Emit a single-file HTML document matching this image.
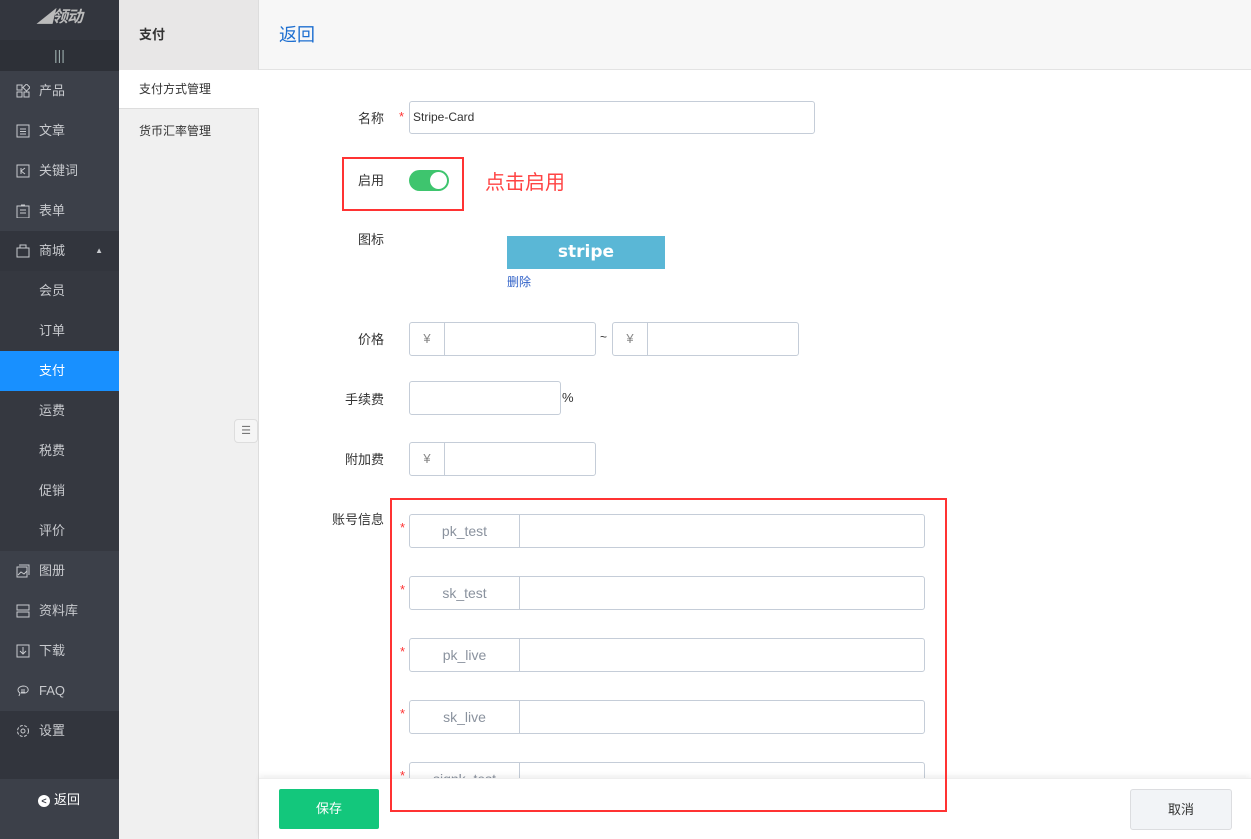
<!DOCTYPE html>
<html><head><meta charset="utf-8"><style>
*{box-sizing:border-box;margin:0;padding:0}
body{width:1251px;height:839px;overflow:hidden;font-family:"Liberation Sans","Noto Sans CJK SC",sans-serif;font-size:13px;color:#333;background:#fff;position:relative}
.abs{position:absolute}
.sb{left:0;top:0;width:119px;height:839px;background:#3c4049}
.mi{position:absolute;left:0;width:119px;height:40px;color:#c8cace;font-size:13px;line-height:40px;padding-left:39px}
.mi svg{position:absolute;left:16px;top:13px}
.sub{padding-left:39px;background:#353840}
.col2{left:119px;top:0;width:140px;height:839px;background:#f0f0f0;border-right:1px solid #ddd}
.lbl{position:absolute;font-size:13px;color:#333;text-align:right;width:80px}
.inp{position:absolute;border:1px solid #c5cdd8;border-radius:3px;background:#fff;height:34px}
.pre{position:absolute;left:0;top:0;bottom:0;border-right:1px solid #c5cdd8;text-align:center;line-height:32px;color:#888}
.star{position:absolute;color:#f33;font-size:13px}
.acc{position:absolute;left:409px;width:516px;height:34px;border:1px solid #c5cdd8;border-radius:3px;background:#fff}
.acc span{position:absolute;left:0;top:0;width:110px;height:32px;border-right:1px solid #c5cdd8;text-align:center;line-height:32px;color:#8a929e;font-size:14px}
</style></head><body>
<div class="abs sb">
 <div class="abs" style="left:0;top:0;width:119px;height:40px;background:#33363e;color:#bbb;font-style:italic;font-weight:bold;font-size:16px;text-align:center;line-height:36px;letter-spacing:-1px">◢领动</div>
 <div class="abs" style="left:0;top:40px;width:119px;height:31px;background:#2d3037;color:#9aa;text-align:center;line-height:31px;font-size:14px">|||</div>
 <div class="mi" style="top:71px"><svg width="14" height="14" fill="none" stroke="#c8cace"><rect x="1" y="1" width="5" height="5"/><rect x="1" y="8" width="5" height="5"/><rect x="8" y="8" width="5" height="5"/><rect x="8" y="1" width="5" height="5" transform="rotate(45 10.5 3.5)"/></svg>产品</div>
 <div class="mi" style="top:111px"><svg width="14" height="14" fill="none" stroke="#c8cace"><rect x="1" y="1" width="12" height="12"/><path d="M4 5h6M4 7.5h6M4 10h6"/></svg>文章</div>
 <div class="mi" style="top:151px"><svg width="14" height="14" fill="none" stroke="#c8cace"><rect x="1" y="1" width="12" height="12"/><path d="M5 4v6M9 4L5 7l4 3"/></svg>关键词</div>
 <div class="mi" style="top:191px"><svg width="14" height="14" fill="none" stroke="#c8cace"><rect x="1" y="2" width="12" height="12"/><path d="M5 1h4M4 6h6M4 9h6"/></svg>表单</div>
 <div class="mi" style="top:231px;background:#32353d"><svg width="14" height="14" fill="none" stroke="#c8cace"><rect x="1" y="4" width="12" height="9"/><path d="M4 4V1h6v3"/></svg>商城<span style="position:absolute;right:16px;top:0;font-size:8px">▲</span></div>
 <div class="abs" style="left:0;top:271px;width:119px;height:280px;background:#353840"></div>
 <div class="mi sub" style="top:271px">会员</div>
 <div class="mi sub" style="top:311px">订单</div>
 <div class="mi sub" style="top:351px;background:#1890ff;color:#fff">支付</div>
 <div class="mi sub" style="top:391px">运费</div>
 <div class="mi sub" style="top:431px">税费</div>
 <div class="mi sub" style="top:471px">促销</div>
 <div class="mi sub" style="top:511px">评价</div>
 <div class="mi" style="top:551px"><svg width="14" height="14" fill="none" stroke="#c8cace"><rect x="1" y="3" width="10" height="10"/><path d="M3 1h10v10M2 11l3-3 3 2 3-3"/></svg>图册</div>
 <div class="mi" style="top:591px"><svg width="14" height="14" fill="none" stroke="#c8cace"><rect x="1" y="1" width="12" height="5"/><rect x="1" y="8" width="12" height="5"/></svg>资料库</div>
 <div class="mi" style="top:631px"><svg width="14" height="14" fill="none" stroke="#c8cace"><rect x="1" y="1" width="12" height="12"/><path d="M7 3v7M4 7l3 3 3-3"/></svg>下载</div>
 <div class="mi" style="top:671px"><svg width="14" height="14" fill="none" stroke="#c8cace"><path d="M3 12l1-3C1 7 1 3 7 2c6 0 7 6 2 7H5"/><path d="M5 6h4M5 8h4"/></svg>FAQ</div>
 <div class="abs" style="left:0;top:711px;width:119px;height:68px;background:#32353d"></div>
 <div class="mi" style="top:711px"><svg width="14" height="14" fill="none" stroke="#c8cace"><circle cx="7" cy="7" r="5.5" stroke-dasharray="3 1.5"/><circle cx="7" cy="7" r="2"/></svg>设置</div>
 <div class="abs" style="left:38px;top:790px;color:#fff;font-size:13px;line-height:20px"><span style="display:inline-block;width:12px;height:12px;border-radius:6px;background:#fff;color:#3c4049;font-size:9px;line-height:12px;text-align:center;font-weight:bold;margin-right:4px">&lt;</span>返回</div>
</div>
<div class="abs col2">
 <div class="abs" style="left:0;top:0;width:139px;height:70px;background:#e8e7e7;font-weight:bold;font-size:13px;line-height:70px;padding-left:20px">支付</div>
 <div class="abs" style="left:0;top:70px;width:140px;height:39px;background:#fff;line-height:39px;padding-left:20px;font-size:12px;border-bottom:1px solid #ddd">支付方式管理</div>
 <div class="abs" style="left:20px;top:122px;font-size:12px">货币汇率管理</div>
 <div class="abs" style="left:115px;top:419px;width:24px;height:24px;border:1px solid #ddd;border-radius:4px;background:#f5f5f5;color:#777;font-size:11px;text-align:center;line-height:22px">☰</div>
</div>
<div class="abs" style="left:259px;top:0;width:992px;height:70px;background:#f7f7f7;border-bottom:1px solid #e3e3e3;color:#1e6fd0;font-size:18px;line-height:70px;padding-left:20px">返回</div>

<div class="lbl" style="left:304px;top:108px">名称</div><span class="star" style="left:399px;top:109px">*</span>
<div class="inp" style="left:409px;top:101px;width:406px;height:33px;font-size:12px;line-height:31px;padding-left:3px">Stripe-Card</div>
<div class="abs" style="left:342px;top:157px;width:122px;height:54px;border:2px solid #f33"></div>
<div class="lbl" style="left:304px;top:170px">启用</div>
<div class="abs" style="left:409px;top:170px;width:40px;height:21px;border-radius:11px;background:#3ec56e"><div class="abs" style="left:21px;top:2px;width:17px;height:17px;border-radius:9px;background:#fff"></div></div>
<div class="abs" style="left:485px;top:166px;color:#f44;font-size:20px">点击启用</div>
<div class="lbl" style="left:304px;top:229px">图标</div>
<div class="abs" style="left:507px;top:236px;width:158px;height:33px;background:#5ab7d6;color:#fff;font-weight:bold;font-size:17px;text-align:center;line-height:33px;font-family:'DejaVu Sans',sans-serif">stripe</div>
<div class="abs" style="left:507px;top:273px;color:#3162c8;font-size:12px">删除</div>

<div class="lbl" style="left:304px;top:329px">价格</div>
<div class="inp" style="left:409px;top:322px;width:187px"><div class="pre" style="width:35px">¥</div></div>
<div class="abs" style="left:600px;top:330px;font-size:12px">~</div>
<div class="inp" style="left:612px;top:322px;width:187px"><div class="pre" style="width:35px">¥</div></div>
<div class="lbl" style="left:304px;top:389px">手续费</div>
<div class="inp" style="left:409px;top:381px;width:152px"></div>
<div class="abs" style="left:562px;top:390px;font-size:13px">%</div>
<div class="lbl" style="left:304px;top:449px">附加费</div>
<div class="inp" style="left:409px;top:442px;width:187px"><div class="pre" style="width:35px">¥</div></div>
<div class="lbl" style="left:304px;top:509px">账号信息</div>

<span class="star" style="left:400px;top:520px">*</span><div class="acc" style="top:514px"><span>pk_test</span></div>
<span class="star" style="left:400px;top:582px">*</span><div class="acc" style="top:576px"><span>sk_test</span></div>
<span class="star" style="left:400px;top:644px">*</span><div class="acc" style="top:638px"><span>pk_live</span></div>
<span class="star" style="left:400px;top:706px">*</span><div class="acc" style="top:700px"><span>sk_live</span></div>
<span class="star" style="left:400px;top:768px">*</span><div class="acc" style="top:762px"><span>signk_test</span></div>

<div class="abs" style="left:259px;top:778px;width:992px;height:61px;background:#fff;box-shadow:0 -3px 5px rgba(0,0,0,.06);border-top:1px solid #eee"></div>
<div class="abs" style="left:390px;top:498px;width:557px;height:314px;border:2px solid #f33"></div>
<div class="abs" style="left:279px;top:789px;width:100px;height:40px;background:#13c77c;border-radius:2px;color:#fff;text-align:center;line-height:40px;font-size:13px">保存</div>
<div class="abs" style="left:1130px;top:789px;width:102px;height:41px;background:#f2f4f7;border:1px solid #dcdde0;border-radius:3px;text-align:center;line-height:39px;font-size:13px">取消</div>
</body></html>
